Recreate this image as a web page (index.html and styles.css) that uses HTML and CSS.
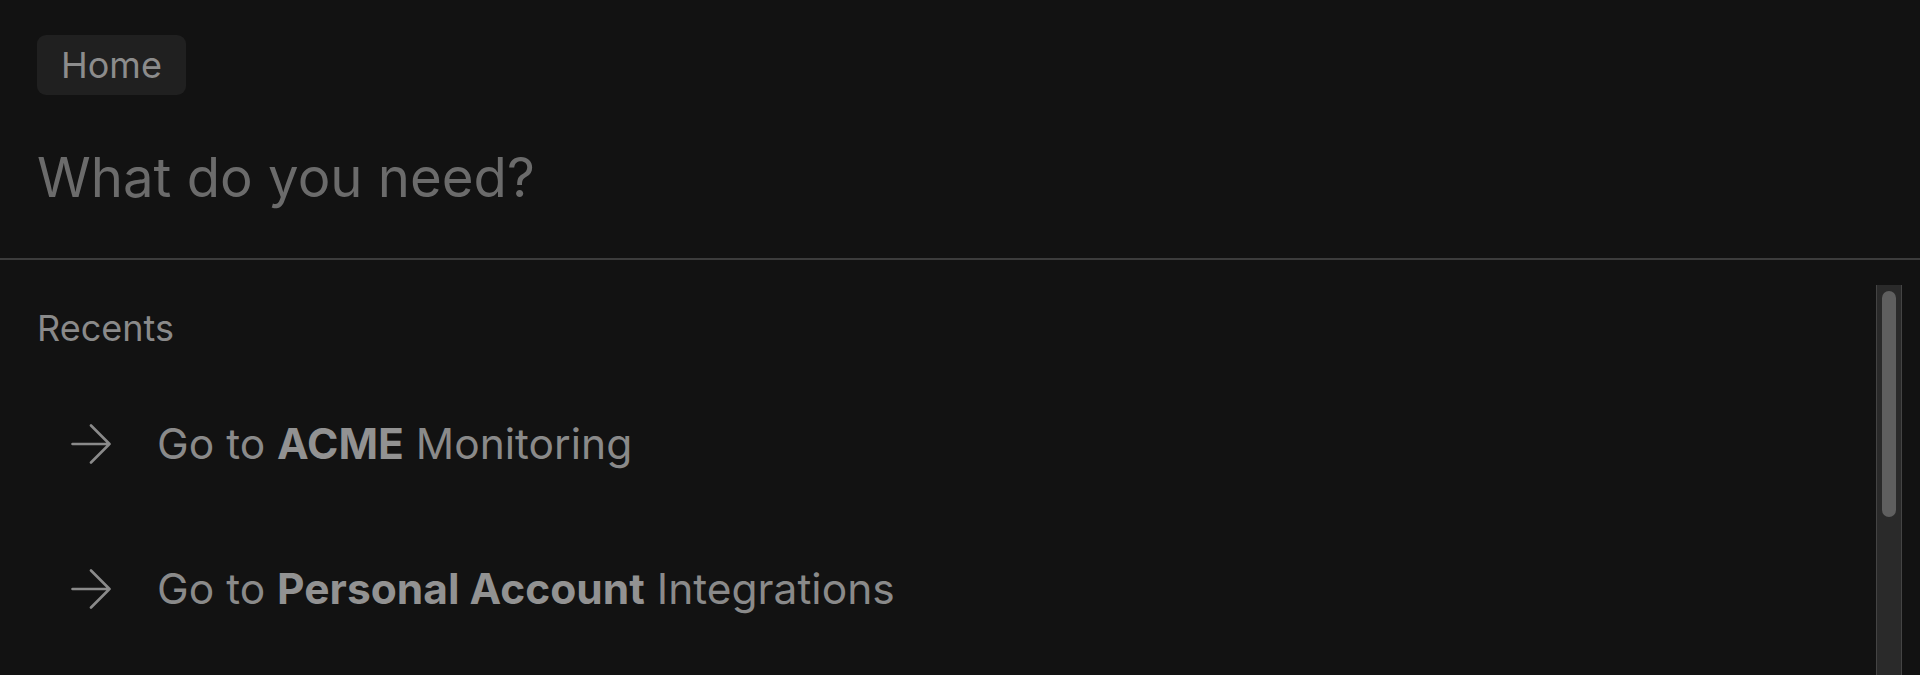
FILE: index.html
```html
<!DOCTYPE html>
<html lang="en">
<head>
<meta charset="utf-8">
<title>Command menu</title>
<link rel="stylesheet" href="styles.css">
</head>
<body>
<div class="palette">
  <div class="header">
    <div class="crumbs"><span class="pill">Home</span></div>
    <div class="prompt">What do you need?</div>
  </div>
  <div class="body">
    <div class="list">
      <div class="group-label">Recents</div>
      <div class="item">
        <svg class="arrow" viewBox="0 0 40 40" width="40" height="40"><path d="M1.5 20 H38.5 M20 1.5 L38.5 20 L20 38.5"/></svg>
        <span class="label">Go to <b>ACME</b> Monitoring</span>
      </div>
      <div class="item">
        <svg class="arrow" viewBox="0 0 40 40" width="40" height="40"><path d="M1.5 20 H38.5 M20 1.5 L38.5 20 L20 38.5"/></svg>
        <span class="label">Go to <b>Personal Account</b> Integrations</span>
      </div>
    </div>
    <div class="scrollbar"><div class="thumb"></div></div>
  </div>
</div>
</body>
</html>
```

FILE: styles.css
```css
html, body {
  margin: 0;
  padding: 0;
  height: 100%;
  background: #121212;
  overflow: hidden;
}
.palette {
  font-family: Inter, "Noto Sans", sans-serif;
  height: 100%;
  display: flex;
  flex-direction: column;
}
.header {
  padding: 35px 37px 48px;
  border-bottom: 2px solid #3c3c3c;
}
.crumbs {
  display: flex;
}
.pill {
  display: inline-block;
  height: 60px;
  line-height: 60px;
  padding: 0 24px;
  background: #202020;
  border-radius: 9px;
  color: #8c8c8c;
  font-size: 36px;
}
.prompt {
  margin-top: 49px;
  font-size: 54.5px;
  line-height: 66px;
  color: #6b6b6b;
}
.body {
  flex: 1;
  display: flex;
  min-height: 0;
}
.list {
  flex: 1;
  padding: 48px 37px 0;
}
.group-label {
  font-size: 36px;
  line-height: 41px;
  color: #8a8a8a;
  margin-bottom: 22px;
}
.item {
  height: 145px;
  display: flex;
  align-items: center;
  gap: 46px;
  padding-left: 34px;
  font-size: 42.5px;
  line-height: 52px;
  color: #8a8a8a;
}
.item b {
  font-weight: 700;
  color: #929292;
}
.arrow {
  flex: none;
  fill: none;
  stroke: #8a8a8a;
  stroke-width: 2.6;
  stroke-linecap: round;
  stroke-linejoin: round;
}
.scrollbar {
  flex: none;
  width: 24px;
  margin: 25px 18px 0 0;
  background: #2a2a2a;
  border-left: 1px solid #444;
  border-right: 1px solid #444;
  padding-top: 6px;
}
.thumb {
  width: 14px;
  height: 226px;
  margin: 0 auto;
  border-radius: 7px;
  background: #5f5f5f;
}
```
